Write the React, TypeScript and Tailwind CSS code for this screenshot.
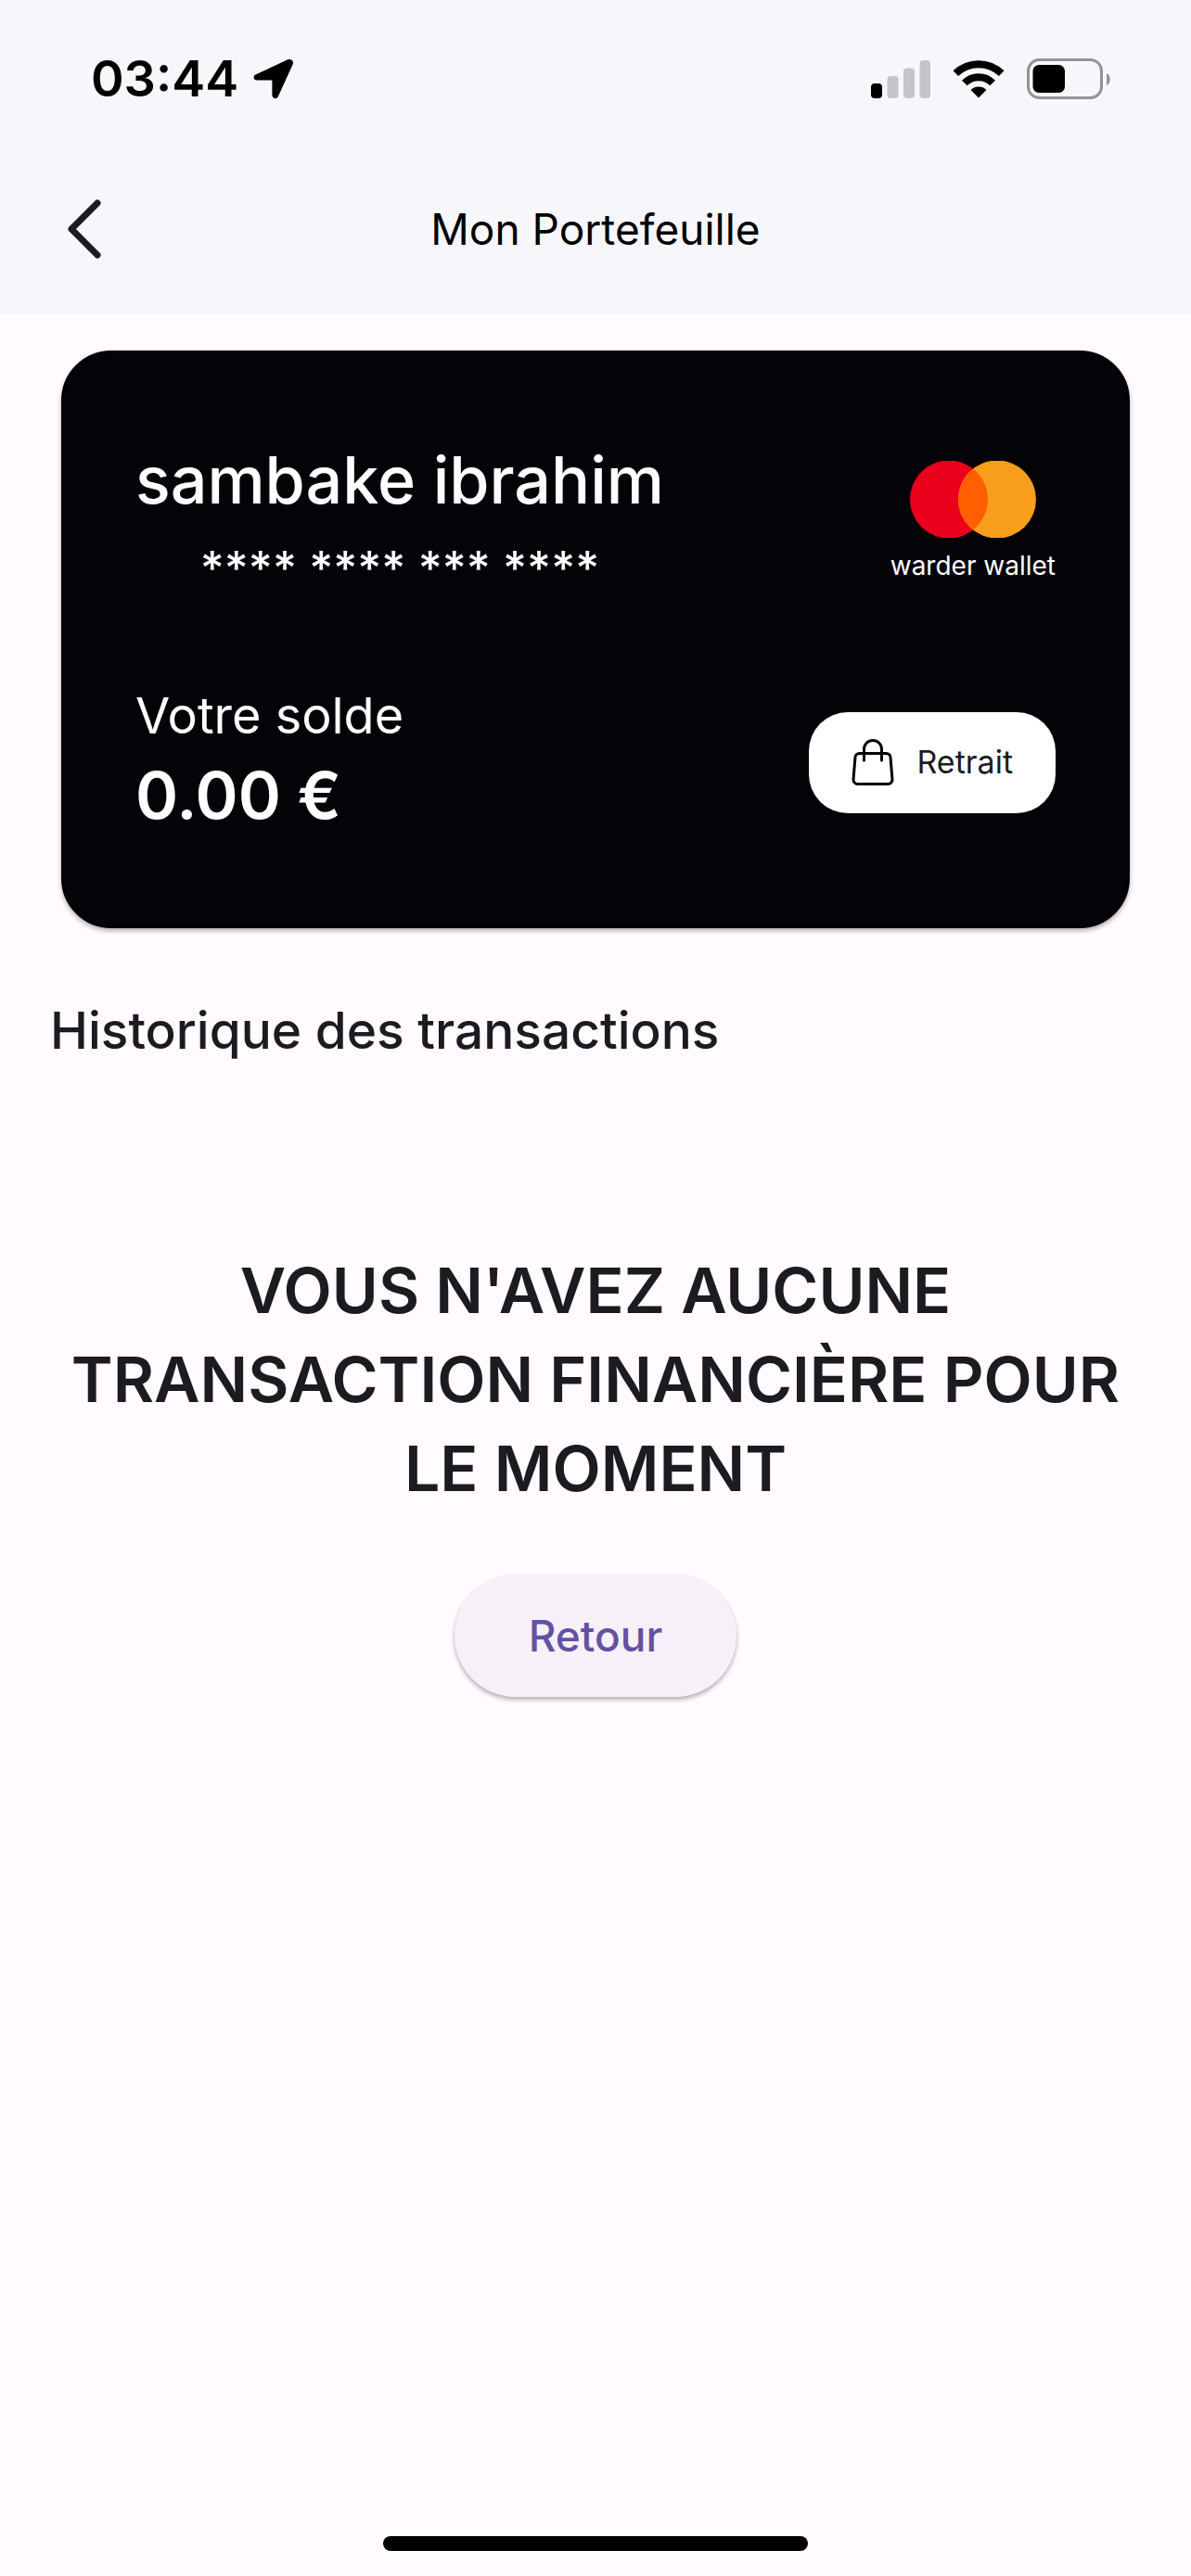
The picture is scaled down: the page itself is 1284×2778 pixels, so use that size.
import { useState } from "react";

function LocationArrow() {
  return (
    <svg viewBox="0 0 44 44" className="size-[44px]" fill="currentColor" aria-hidden="true">
      <path d="M2.6 17.6 37.2 1.3c3.6-1.6 7 1.6 5.4 5.2L26.8 41.2c-1.4 3.1-6.4 2.4-6.4-1.6V24.5c0-.6-.3-.9-.9-.9H4.2c-4 0-4.8-4.5-1.6-6Z" />
    </svg>
  );
}

function SignalBars() {
  return (
    <svg viewBox="0 0 64 41" className="h-[41px] w-[64px]" aria-hidden="true">
      <rect x="0" y="25" width="12" height="16" rx="4" fill="#000" />
      <rect x="17.5" y="17" width="12" height="24" rx="4" fill="#c5c4c9" />
      <rect x="35" y="8.5" width="12" height="32.5" rx="4" fill="#c5c4c9" />
      <rect x="52.5" y="0" width="11.5" height="41" rx="4" fill="#c5c4c9" />
    </svg>
  );
}

function WifiIcon() {
  return (
    <svg viewBox="0 0 56 42" className="h-[42px] w-[56px]" aria-hidden="true">
      <g fill="none" stroke="#000" strokeWidth="8">
        <path d="M3.3 15.2A35.5 35.5 0 0 1 52.7 15.2" />
        <path d="M12.8 25.5A21.5 21.5 0 0 1 43.2 25.5" />
      </g>
      <path d="M28 41.5 19.6 33a12 12 0 0 1 16.8 0Z" />
    </svg>
  );
}

function BatteryIcon() {
  return (
    <svg viewBox="0 0 91 44" className="h-[44px] w-[91px]" aria-hidden="true">
      <rect x="1.5" y="1.5" width="79" height="41" rx="12" fill="none" stroke="#949397" strokeWidth="3" />
      <rect x="6.5" y="7" width="34.5" height="30" rx="6.5" />
      <path d="M86 16c5 1.5 5 11.5 0 13Z" fill="#949397" />
    </svg>
  );
}

function StatusBar() {
  return (
    <div className="flex h-[170px] items-center justify-between pr-[86px] pl-[98px]">
      <div className="flex items-center gap-4">
        <span className="text-[54px] leading-[64px] font-semibold">03:44</span>
        <LocationArrow />
      </div>
      <div className="flex items-center gap-6">
        <SignalBars />
        <WifiIcon />
        <BatteryIcon />
      </div>
    </div>
  );
}

function CardLogo() {
  return (
    <svg viewBox="0 0 136 83" className="h-[83px] w-[136px]" aria-hidden="true">
      <circle cx="42" cy="41.5" r="42" fill="#eb001b" />
      <circle cx="94" cy="41.5" r="42" fill="#f79e1b" />
      <path d="M68 8.5a42 42 0 0 1 0 66 42 42 0 0 1 0-66Z" fill="#ff5f00" />
    </svg>
  );
}

function BagIcon() {
  return (
    <svg viewBox="0 0 46 52" className="h-[52px] w-[46px]" fill="none" stroke="#000" strokeWidth="3" strokeLinecap="round" aria-hidden="true">
      <path d="M8.5 16.5h29a4.5 4.5 0 0 1 4.5 4.2l2 24a4.5 4.5 0 0 1-4.5 4.8h-33A4.5 4.5 0 0 1 2 44.7l2-24a4.5 4.5 0 0 1 4.5-4.2Z" />
      <path d="M13.5 24V12a9.5 9.5 0 0 1 19 0v12" />
    </svg>
  );
}

function WalletCard({ holder, balance }: { holder: string; balance: number }) {
  return (
    <section className="mx-[66px] mt-[39px] flex flex-col gap-[88px] rounded-[54px] border-[3px] border-black bg-[#040308] px-[77px] pt-[95px] pb-[90px] text-white shadow-[0_3px_5px_rgba(0,0,0,0.3)]">
      <div className="flex items-center justify-between">
        <div className="flex flex-col items-center gap-4">
          <h2 className="text-[70px] leading-[84px] font-medium">{holder}</h2>
          <p className="text-[50px] leading-[72px] font-medium">**** **** *** ****</p>
        </div>
        <div className="flex flex-col items-center gap-3">
          <CardLogo />
          <span className="text-[28px] leading-[36px]">warder wallet</span>
        </div>
      </div>

      <div className="flex items-center justify-between">
        <div>
          <p className="text-[54px] leading-[72px]">Votre solde</p>
          <p className="text-[70px] leading-[100px] font-semibold">{balance.toFixed(2)} €</p>
        </div>
        <button
          type="button"
          className="flex h-[109px] items-center gap-6 rounded-[42px] bg-white px-[46px] text-[34px] leading-[40px] text-[#1c1b1f]"
        >
          <BagIcon />
          Retrait
        </button>
      </div>
    </section>
  );
}

export default function App() {
  const [balance] = useState(0);

  return (
    <div className="flex min-h-screen flex-col bg-[#fffbff] font-['Inter',sans-serif] text-[#1c1b1f]">
      <header className="bg-[#f7f7fb] pb-[15px] text-black">
        <StatusBar />
        <div className="grid h-[154px] grid-cols-[1fr_auto_1fr] items-center px-[66px]">
          <button type="button" aria-label="Retour" className="w-fit p-1 text-[#1c1b1f]">
            <svg viewBox="0 0 42 66" className="h-[66px] w-[42px]" fill="none" stroke="currentColor" strokeWidth="7" strokeLinecap="round" strokeLinejoin="round" aria-hidden="true">
              <path d="M35 5 7 33l28 28" />
            </svg>
          </button>
          <h1 className="text-[46px] leading-[60px]">Mon Portefeuille</h1>
        </div>
      </header>

      <main className="flex flex-1 flex-col">
        <WalletCard holder="sambake ibrahim" balance={balance} />

        <h2 className="mx-[54px] mt-[74px] text-[55px] leading-[72px] font-medium">
          Historique des transactions
        </h2>

        <div className="mt-[196px] flex flex-col items-center gap-[67px] px-[54px]">
          <p className="text-center text-[68px] leading-[96px] font-semibold uppercase">
            Vous n'avez aucune transaction financière pour le moment
          </p>
          <button
            type="button"
            className="h-[132px] rounded-full bg-[#f6f1f9] px-[80px] text-[46px] leading-[60px] font-medium text-[#6750a4] shadow-[0_3px_5px_rgba(0,0,0,0.3)]"
          >
            Retour
          </button>
        </div>
      </main>

      <footer className="flex justify-center pb-[27px]">
        <div className="h-[16px] w-[458px] rounded-full bg-black" />
      </footer>
    </div>
  );
}
